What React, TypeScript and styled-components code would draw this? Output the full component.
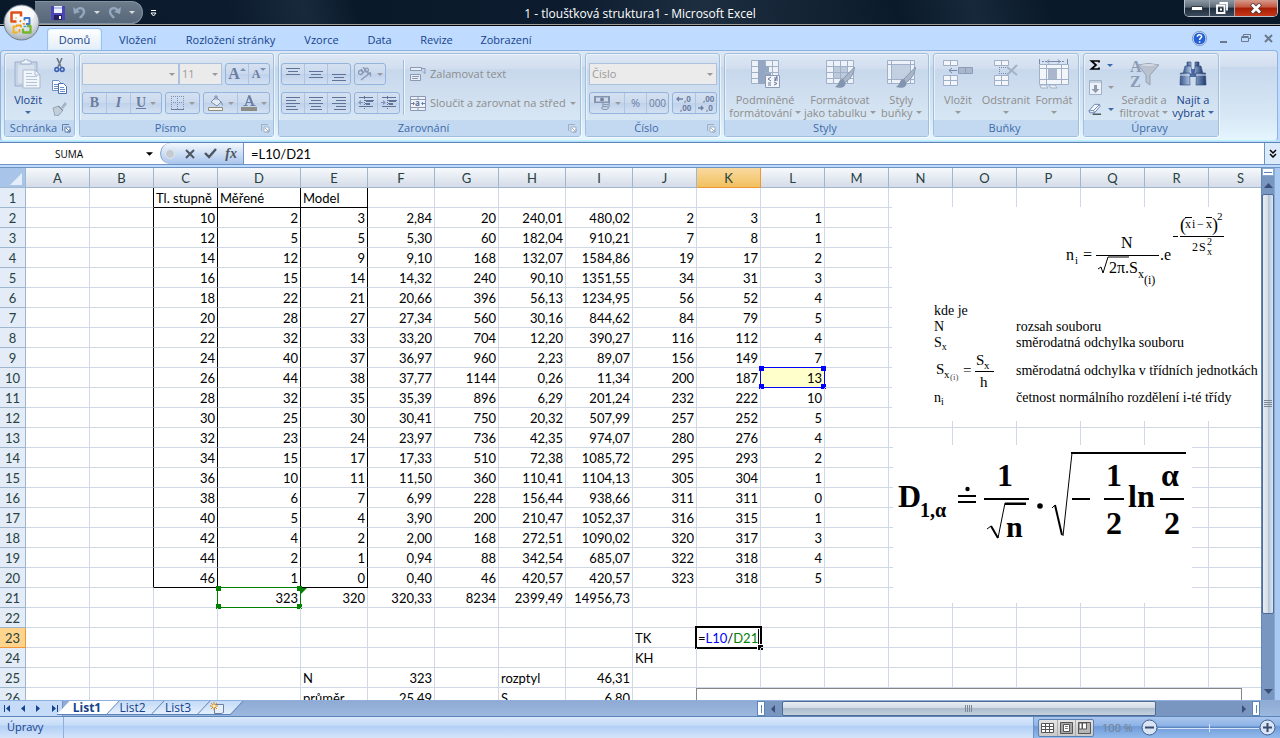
import React from "react";
import styled, { createGlobalStyle, css } from "styled-components";

const ui = `"Open Sans", "Noto Sans", sans-serif`;
const sheet = `Lato, "Open Sans", sans-serif`;
const serif = `"Liberation Serif", "DejaVu Serif", serif`;

const Global = createGlobalStyle`
  *, *::before, *::after { box-sizing: border-box; }
  body { margin: 0; background: #fff; }
  button, input, select { font: inherit; color: inherit; margin: 0; padding: 0; border: 0; background: none; outline: 0; border-radius: 0; }
  svg { display: block; flex: none; }
`;

/* ---------- window frame ---------- */

const Window = styled.div`
  display: flex;
  flex-direction: column;
  width: 100%;
  height: 100vh;
  overflow: hidden;
  position: relative;
  font: 11px/16px ${ui};
  color: #15428b;
  background: #bfdbff;
`;

const TitleBar = styled.header`
  flex: none;
  height: 26px;
  display: flex;
  align-items: flex-start;
  justify-content: space-between;
  background: linear-gradient(75deg, #0a192a 0%, #0c1b2d 18%, #172a3c 24%, #0a192a 28%, #0c1c2e 44%, #1d2e40 55%, #0b1a2b 70%, #16283a 76%, #0a192a 82%);
  border-bottom: 1px solid #000;
  box-shadow: inset 0 -1px 0 #9c9f9c;
`;

const Title = styled.h1`
  margin: 0;
  padding-top: 6px;
  font: 12px/16px ${ui};
  color: #fff;
  text-align: center;
`;

const Side = styled.div<{ $end?: boolean }>`
  flex: 1;
  display: flex;
  justify-content: ${(p) => (p.$end ? "flex-end" : "flex-start")};
  align-items: flex-start;
`;

const QuickAccess = styled.div`
  display: flex;
  align-items: center;
  gap: 8px;
  width: 108px;
  height: 23px;
  margin: 1px 0 0 35px;
  padding-left: 16px;
  border: 1px solid #8292a2;
  border-left: 0;
  border-radius: 0 12px 12px 0;
  background: linear-gradient(#6d7b8a, #56677a);
`;

const PlainButton = styled.button`
  display: flex;
  align-items: center;
  justify-content: center;
`;

const CustomizeButton = styled(PlainButton)`
  margin: 8px 0 0 5px;
  width: 10px;
  height: 11px;
`;

const OfficeButton = styled.button`
  position: absolute;
  left: 3px;
  top: 4px;
  width: 37px;
  height: 37px;
`;

const WindowButtons = styled.div`
  display: flex;
  height: 17px;
  margin-right: 2px;
  border: 1px solid #b9c2ca;
  border-top: 0;
  border-radius: 0 0 5px 5px;
  overflow: hidden;
`;

const WindowButton = styled.button<{ $close?: boolean }>`
  display: flex;
  justify-content: center;
  align-items: center;
  width: ${(p) => (p.$close ? 42 : 25)}px;
  height: 16px;
  border-right: ${(p) => (p.$close ? 0 : 1)}px solid #9aa6b0;
  background: ${(p) =>
    p.$close
      ? "linear-gradient(#d59a8c 0%, #c4563e 45%, #a61c04 50%, #c8381a 100%)"
      : "linear-gradient(#8d98a3 0%, #5d6b79 45%, #1c2b3b 50%, #3c4c5c 100%)"};
`;

/* ---------- ribbon ---------- */

const TabRow = styled.nav`
  flex: none;
  display: flex;
  align-items: flex-end;
  height: 24px;
  padding-left: 47px;
  background: #bfdbff;
`;

const Tab = styled.button<{ $w: number; $active?: boolean }>`
  width: ${(p) => p.$w}px;
  height: 22px;
  line-height: 21px;
  text-align: center;
  white-space: nowrap;
  border-radius: 4px 4px 0 0;
  ${(p) =>
    p.$active &&
    css`
      margin-right: 2px;
      background: linear-gradient(#fff, #e3edf9);
      border: 1px solid #9cc0ea;
      border-bottom: 0;
      box-shadow: inset 0 0 2px #b5f0f5;
    `}
`;

const DocButtons = styled.div`
  display: flex;
  align-items: center;
  gap: 13px;
  height: 24px;
  margin-left: auto;
  padding-right: 7px;
`;

const RibbonBar = styled.section`
  flex: none;
  display: flex;
  gap: 4px;
  height: 91px;
  margin: 0 2px 0 0;
  padding: 2px 4px 3px 3px;
  border: 1px solid #8db2e3;
  border-bottom-color: #b9f1fb;
  border-radius: 4px;
  background: linear-gradient(#dee8f5 0%, #d3dfef 17%, #c7d8ed 18%, #d8e8f5 75%, #e6f6ff 100%);
`;

const GroupBox = styled.section<{ $w: number }>`
  display: flex;
  flex-direction: column;
  width: ${(p) => p.$w}px;
  border: 1px solid #9fbfdf;
  border-radius: 3px;
  box-shadow: inset 1px 1px 0 rgba(255, 255, 255, 0.5), 1px 1px 0 rgba(255, 255, 255, 0.6);
  background: linear-gradient(#dde7f4 0%, #d2deef 18%, #c8d8ec 19%, #dcebf6 100%);
`;

const GroupBody = styled.div<{ $pad?: number }>`
  flex: 1;
  display: flex;
  padding: 0 ${(p) => p.$pad ?? 3}px;
`;

const Caption = styled.footer`
  display: flex;
  align-items: center;
  height: 16px;
  padding-right: 3px;
  color: #3e6aaa;
  background: #c2d9f1;
`;

const CaptionText = styled.span`
  flex: 1;
  text-align: center;
`;

const Rows = styled.div`
  display: flex;
  flex-direction: column;
  gap: 7px;
  padding-top: 9px;
`;

const Row = styled.div<{ $gap?: number }>`
  display: flex;
  align-items: center;
  gap: ${(p) => p.$gap ?? 3}px;
  height: 22px;
`;

const Segments = styled.div`
  display: flex;
  height: 22px;
  border: 1px solid #93b4dc;
  border-radius: 3px;
  background: linear-gradient(#d5e1f1 0%, #cbd9ee 48%, #bfd1ea 50%, #d3e0f2 100%);
`;

const Segment = styled.button<{ $w?: number }>`
  display: flex;
  align-items: center;
  justify-content: center;
  gap: 4px;
  width: ${(p) => p.$w ?? 22}px;
  color: #6a7c9f;
  & + & {
    border-left: 1px solid #adc5e4;
  }
`;

const Digits = styled.span`
  font: 10px/16px ${ui};
`;

const Glyph = styled.span<{ $size?: number; $italic?: boolean; $under?: boolean }>`
  font: bold ${(p) => p.$size ?? 14}px/14px ${serif};
  font-style: ${(p) => (p.$italic ? "italic" : "normal")};
  text-decoration: ${(p) => (p.$under ? "underline" : "none")};
  color: #6a7c9f;
`;

const DarkGlyph = styled(Glyph)`
  color: #4d5560;
`;

const SelectWrap = styled.label<{ $w: number }>`
  position: relative;
  display: flex;
  align-items: center;
  width: ${(p) => p.$w}px;
  height: 22px;
  border: 1px solid #abc1de;
  background: #ebebeb;
  svg {
    position: absolute;
    right: 3px;
  }
`;

const Select = styled.select`
  appearance: none;
  width: 100%;
  height: 20px;
  padding-left: 2px;
  color: #9a9a9a;
  opacity: 1;
`;

const Big = styled.button<{ $w: number; $on?: boolean }>`
  display: flex;
  flex-direction: column;
  align-items: center;
  width: ${(p) => p.$w}px;
  padding-top: 4px;
  font: 11px/13px ${ui};
  white-space: nowrap;
  color: ${(p) => (p.$on ? "#15428b" : "#8d8d8d")};
`;

const BigIcon = styled.span`
  display: flex;
  align-items: center;
  justify-content: center;
  height: 32px;
  margin-bottom: 3px;
`;

const BigLine = styled.span`
  display: flex;
  align-items: center;
  gap: 3px;
  height: 13px;
`;

const SmallColumn = styled.div<{ $w: number }>`
  display: flex;
  flex-direction: column;
  gap: 6px;
  width: ${(p) => p.$w}px;
  padding-top: 3px;
`;

const SmallButton = styled.button`
  display: flex;
  align-items: center;
  justify-content: center;
  gap: 6px;
  height: 16px;
`;

const TextButton = styled.button`
  display: flex;
  align-items: center;
  gap: 4px;
  height: 22px;
  padding-left: 5px;
  color: #8d8d8d;
  white-space: nowrap;
`;

const Divider = styled.div`
  width: 2px;
  height: 55px;
  margin: 6px 0 0 3px;
  border-left: 1px solid #9dbce0;
  border-right: 1px solid #eef5fc;
`;

/* ---------- formula bar ---------- */

const FormulaBar = styled.div`
  flex: none;
  display: flex;
  height: 23px;
  margin-top: 1px;
  border-top: 1px solid #5b84b8;
  border-bottom: 1px solid #6f94c4;
  background: #fff;
  color: #000;
`;

const NameBox = styled.div`
  display: flex;
  align-items: center;
  gap: 8px;
  width: 160px;
`;

const NameInput = styled.input`
  width: 138px;
  font: 10px/16px ${ui};
  text-align: center;
`;

const FormulaTools = styled.div`
  display: flex;
  align-items: center;
  justify-content: space-between;
  width: 84px;
  padding: 0 6px 0 3px;
  border-left: 1px solid #7d9cc8;
  border-right: 1px solid #6f94c4;
  border-radius: 11px 0 0 11px;
  background: linear-gradient(#f2f7fd, #a9c5ec);
`;

const FormulaInput = styled.input`
  flex: 1;
  min-width: 0;
  padding-left: 7px;
  font: 13px/20px ${sheet};
`;

const ExpandButton = styled(PlainButton)`
  width: 16px;
  border-left: 1px solid #6f94c4;
  background: #dcebfc;
`;

/* ---------- worksheet ---------- */

const Workspace = styled.main`
  flex: 1;
  min-height: 0;
  display: flex;
  margin-top: 2px;
  border-top: 1px solid #6f94c4;
  background: #a9c8f2;
`;

const GridView = styled.div`
  position: relative;
  flex: 1;
  min-width: 0;
  overflow: hidden;
  background: #fff;
`;

const Grid = styled.table`
  table-layout: fixed;
  width: 1273px;
  border-collapse: separate;
  border-spacing: 0;
  font: 13px/17px ${sheet};
  color: #000;
`;

const Col = styled.col<{ $w: number }>`
  width: ${(p) => p.$w}px;
`;

const ColHead = styled.th<{ $on?: boolean }>`
  height: 20px;
  padding: 2px 0 0;
  font-weight: normal;
  color: #27413e;
  border-right: 1px solid ${(p) => (p.$on ? "#f29536" : "#9eb6ce")};
  border-bottom: 1px solid ${(p) => (p.$on ? "#f29536" : "#9eb6ce")};
  background: ${(p) => (p.$on ? "linear-gradient(#f9d99f, #f1c15f)" : "linear-gradient(#f6f9fc, #d5dce8)")};
`;

const Corner = styled.th`
  height: 20px;
  padding: 0;
  border-right: 1px solid #9eb6ce;
  border-bottom: 1px solid #9eb6ce;
  background: #a9c4e9;
  svg {
    margin: 3px 0 0 10px;
  }
`;

const RowHead = styled.th<{ $on?: boolean }>`
  height: 20px;
  padding: 2px 0 0;
  font-weight: normal;
  color: #27413e;
  border-right: 1px solid ${(p) => (p.$on ? "#f29536" : "#9eb6ce")};
  border-bottom: 1px solid ${(p) => (p.$on ? "#f29536" : "#9eb6ce")};
  background: ${(p) => (p.$on ? "#ffd58d" : "#e4ecf7")};
`;

const Cell = styled.td<{ $left?: boolean; $right?: boolean; $bottom?: boolean; $fill?: boolean }>`
  position: relative;
  height: 20px;
  padding: 2px 2px 0;
  text-align: ${(p) => (p.$left ? "left" : "right")};
  white-space: nowrap;
  border-right: 1px solid ${(p) => (p.$right ? "#000" : "#d0d7e5")};
  border-bottom: 1px solid ${(p) => (p.$bottom ? "#000" : "#d0d7e5")};
  background: ${(p) => (p.$fill ? "#ffffcc" : "transparent")};
`;

const RangeFrame = styled.div<{ $color: string }>`
  position: absolute;
  inset: -1px;
  border: 1px solid ${(p) => p.$color};
`;

const Handle = styled.i<{ $color: string; $x: "left" | "right"; $y: "top" | "bottom" }>`
  position: absolute;
  ${(p) => p.$x}: -2px;
  ${(p) => p.$y}: -2px;
  width: 5px;
  height: 5px;
  background: ${(p) => p.$color};
`;

const ErrorMark = styled.i`
  position: absolute;
  left: 0;
  top: 0;
  border-top: 6px solid #008000;
  border-right: 6px solid transparent;
`;

const Editor = styled.div`
  position: absolute;
  inset: -2px;
  padding: 1px 0 0 1px;
  text-align: left;
  line-height: 18px;
  background: #fff;
  border: 2px solid #000;
  &::after {
    content: "";
    position: absolute;
    right: -3px;
    bottom: -3px;
    width: 6px;
    height: 6px;
    background: #000;
    border: 1px solid #fff;
    border-width: 1px 0 0 1px;
  }
`;

const Ref = styled.span<{ $color: string }>`
  color: ${(p) => p.$color};
`;

const Caret = styled.i`
  display: inline-block;
  width: 1px;
  height: 15px;
  vertical-align: top;
  background: #000;
`;

const Picture = styled.figure<{ $x: number; $y: number; $w: number; $h: number }>`
  position: absolute;
  left: ${(p) => p.$x}px;
  top: ${(p) => p.$y}px;
  width: ${(p) => p.$w}px;
  height: ${(p) => p.$h}px;
  margin: 0;
  overflow: hidden;
  background: #fff;
  font-family: ${serif};
  color: #000;
`;

const ChartFrame = styled(Picture)`
  border: 1px solid #868686;
`;

const Legend = styled.dl`
  display: grid;
  grid-template-columns: 82px max-content;
  grid-template-rows: 16px 16px 16px 39px 16px;
  align-items: center;
  margin: 0;
  padding: 6px 0 0 42px;
  font: 14px/16px ${serif};
  dt, dd { margin: 0; white-space: nowrap; }
  sub { font-size: 10px; line-height: 0; vertical-align: -3px; }
`;

/* ---------- scroll bars, sheet tabs, status ---------- */

const VScroll = styled.div`
  display: flex;
  flex-direction: column;
  width: 14px;
  margin-right: 5px;
  border-left: 1px solid #6288b8;
  border-right: 1px solid #86a8d4;
  background: #7896c0;
`;

const SplitBox = styled.div`
  display: flex;
  align-items: center;
  justify-content: center;
  height: 8px;
  background: #fff;
  border: 1px solid #8aa9cf;
`;

const ArrowCell = styled(PlainButton)`
  width: 12px;
  height: 18px;
  flex: none;
`;

const VThumb = styled.div`
  display: flex;
  align-items: center;
  justify-content: center;
  flex: 421;
  border: 1px solid #4f6a96;
  border-radius: 2px;
  background: linear-gradient(90deg, #e8edf2, #d5dde6 45%, #aec0d4 50%, #dfe8f0);
`;

const VTrack = styled.div`
  flex: 68;
`;

const BottomRow = styled.div`
  flex: none;
  display: flex;
  height: 17px;
  border-top: 1px solid #8fb0dc;
  border-bottom: 1px solid #5b84b8;
  background: linear-gradient(#8fabd4, #9db8de);
`;

const SheetNav = styled.div`
  display: flex;
  align-items: center;
  justify-content: space-around;
  width: 63px;
  background: #c5dbf8;
  border-right: 1px solid #6f94c4;
`;

const SheetTab = styled.button<{ $active?: boolean; $w: number }>`
  position: relative;
  z-index: ${(p) => (p.$active ? 2 : 1)};
  display: flex;
  justify-content: center;
  align-items: center;
  width: ${(p) => p.$w}px;
  height: 14px;
  padding-right: ${(p) => (p.$active ? 2 : 6)}px;
  font: ${(p) => (p.$active ? "bold" : "normal")} 12px/14px ${ui};
  &::before {
    content: "";
    position: absolute;
    inset: 0;
    z-index: -1;
    transform: skewX(-43deg);
    border-right: 1px solid #5b84b8;
    border-bottom: 1px solid #5b84b8;
    background: ${(p) => (p.$active ? "#fff" : "linear-gradient(#c4daf7, #e4effc)")};
  }
`;

const HScroll = styled.div`
  display: flex;
  flex: 0 1 503px;
  margin-left: auto;
  margin-right: 20px;
  background: #7896c0;
`;

const HSplit = styled.div`
  display: flex;
  align-items: center;
  justify-content: center;
  width: 8px;
  border: 1px solid #5b84b8;
  background: #fff;
`;

const HThumb = styled.div`
  display: flex;
  align-items: center;
  justify-content: center;
  flex: 374;
  border: 1px solid #4f6a96;
  border-radius: 2px;
  background: linear-gradient(#e8edf2, #d0d9e2 48%, #acbccd 50%, #c5d2df);
`;

const HTrack = styled.div`
  flex: 80;
`;

const HArrow = styled(PlainButton)`
  width: 17px;
`;

const StatusBar = styled.footer`
  flex: none;
  display: flex;
  height: 21px;
  background: linear-gradient(#d9e8fb 0%, #c6dcf8 38%, #b2cff5 45%, #d5e5fb 100%);
`;

const Mode = styled.div`
  width: 64px;
  padding-left: 7px;
  line-height: 20px;
  border-right: 1px solid #8fb0dc;
`;

const StatusRight = styled.div`
  display: flex;
  align-items: center;
  margin-left: auto;
  width: 247px;
  padding: 0 4px;
  border-left: 1px solid #6f94c4;
  background: linear-gradient(#a9c6ee 0%, #8fb4e6 40%, #6f9bd8 46%, #94bbee 100%);
`;

const ViewButtons = styled.div`
  display: flex;
  height: 18px;
  border: 1px solid #5b7fb0;
  border-radius: 2px;
  background: linear-gradient(#e4e4e4, #c9c9c9);
`;

const ViewButton = styled(PlainButton)`
  width: 18px;
  & + & {
    border-left: 1px solid #b0b0b0;
  }
`;

const Zoom = styled.span`
  width: 47px;
  text-align: center;
  color: #75808f;
`;

const ZoomTrack = styled.div`
  position: relative;
  flex: 1;
  height: 2px;
  background: #5f86bd;
  border-bottom: 1px solid #d6e5fa;
  &::after {
    content: "";
    position: absolute;
    left: 50%;
    top: -3px;
    width: 1px;
    height: 8px;
    background: #d6e5fa;
  }
`;

/* ---------- icons ---------- */

const Down = ({ c = "#15428b", w = 6 }: { c?: string; w?: number }) => (
  <svg width={w} height={w === 6 ? 3 : 4} viewBox="0 0 6 3"><path d="M0 0h6L3 3z" fill={c} /></svg>
);
const grey = "#9a9a9a";

const Launcher = ({ c }: { c: string }) => (
  <svg width="9" height="9" viewBox="0 0 9 9">
    <path d="M.5 7V.5H7" stroke={c} fill="none" />
    <path d="M3 3h5v5H3z" fill="#fff" stroke={c} />
    <path d="M4 4l3.500 3.500M8 5v3H5" stroke={c} fill="none" />
  </svg>
);

const Office = () => (
  <svg width="37" height="37" viewBox="0 0 37 37">
    <defs>
      <radialGradient id="orb" cx=".5" cy=".3" r=".75">
        <stop offset="0" stopColor="#fff" /><stop offset=".5" stopColor="#e6eaee" /><stop offset="1" stopColor="#9aa5b0" />
      </radialGradient>
    </defs>
    <circle cx="18.500" cy="18.500" r="17.500" fill="url(#orb)" stroke="#6f7e8e" />
    <ellipse cx="18.500" cy="10" rx="13" ry="7.500" fill="#fff" opacity=".7" />
    <g fill="none" strokeLinejoin="round">
      <path d="M13.500 17.500H8.500V8.500h9.500v4" stroke="#e0521b" strokeWidth="2.600" />
      <path d="M21.500 16.500V14h5v6h-3.500" stroke="#3b78c9" strokeWidth="1.900" />
      <path d="M14.500 28.500H10.500v-6h3.500" stroke="#f3b21a" strokeWidth="2" />
      <path d="M20 24.500v4h7.500v-6.500h-3.500" stroke="#77b52c" strokeWidth="2.300" />
      <path d="M12.500 14h1M16.500 17.500h1v-1.500M20.500 19v1h1.500" stroke="#ee8a1c" strokeWidth="1.600" />
      <path d="M16.500 28.500v-3.500M13 21.500h5v2" stroke="#f0a01c" strokeWidth="1.800" />
      <path d="M20.500 22.500h3" stroke="#4f9fe0" strokeWidth="1.500" />
    </g>
  </svg>
);

const Save = () => (
  <svg width="14" height="14" viewBox="0 0 14 14">
    <path d="M0 0h14v14H1L0 13z" fill="#4a45b5" />
    <path d="M3 0h8v7H3z" fill="#eef0fb" /><path d="M3 1h8v2H3z" fill="#b9bff0" />
    <path d="M3 9h8v5H3z" fill="#23205f" /><path d="M8 10h2v3H8z" fill="#fff" />
  </svg>
);

const Undo = ({ flip }: { flip?: boolean }) => (
  <svg width="13" height="13" viewBox="0 0 13 13">
    <g transform={flip ? "translate(13 0) scale(-1 1)" : undefined}>
      <path d="M3 5C5 1 11 1 11 6c0 3-3 4-4 6" fill="none" stroke="#94a8c0" strokeWidth="2.400" />
      <path d="M0 1l1 7 6-2z" fill="#94a8c0" />
    </g>
  </svg>
);

const Paste = () => (
  <svg width="28" height="30" viewBox="0 0 28 30">
    <path d="M1 3h22v24H1z" fill="#c6d3e4" stroke="#9db0c9" />
    <path d="M4 6h16v18H4z" fill="#d8e2ee" />
    <path d="M7 5V2h3a2 2 0 014 0h3v3z" fill="#eef3f9" stroke="#9db0c9" />
    <path d="M9 11h12l5 5v13H9z" fill="#f2f6fb" stroke="#a9bad0" />
    <path d="M21 11v5h5" fill="none" stroke="#a9bad0" />
    <path d="M12 14.500h6M12 17.500h11M12 20.500h11M12 23.500h11M12 26.500h11" stroke="#b5c5d9" />
  </svg>
);

const Scissors = () => (
  <svg width="11" height="15" viewBox="0 0 11 15">
    <path d="M3 0l4 9M8 0L4 9" stroke="#6c7786" strokeWidth="1.600" />
    <circle cx="2.800" cy="11.500" r="1.900" fill="none" stroke="#3d63b0" strokeWidth="1.600" />
    <circle cx="8.200" cy="11.500" r="1.900" fill="none" stroke="#3d63b0" strokeWidth="1.600" />
  </svg>
);

const Copy = () => (
  <svg width="16" height="14" viewBox="0 0 16 14">
    <path d="M.5.5h6l2 2v8h-8z" fill="#fff" stroke="#6f8fc4" />
    <path d="M2 4.500h4M2 6.500h4M2 8.500h4" stroke="#6f8fc4" />
    <path d="M6.500 3.500h5l3 3v7h-8z" fill="#fff" stroke="#4a6db3" />
    <path d="M8 7.500h4M8 9.500h5M8 11.500h5" stroke="#6f8fc4" />
  </svg>
);

const Painter = () => (
  <svg width="15" height="14" viewBox="0 0 15 14">
    <path d="M9 5l4-5 2 2-4 5z" fill="#a5b4c6" />
    <path d="M1 6l6-2 4 4-4 5-4 1z" fill="#c3ced9" stroke="#95a6ba" />
    <path d="M6 4l5 5" stroke="#8091a8" />
  </svg>
);

const Grow = ({ shrink }: { shrink?: boolean }) => (
  <svg width="6" height="12" viewBox="0 0 6 12"><path d={shrink ? "M0 0h6L3 3z" : "M0 3h6L3 0z"} fill="#7f92b3" /></svg>
);

const Lines = ({ rows }: { rows: [number, number, number][] }) => (
  <svg width="14" height="14" viewBox="0 0 14 14">
    {rows.map(([x, y, w]) => <path key={y} d={`M${x} ${y + 0.5}h${w}`} stroke="#5f7298" />)}
  </svg>
);

const Indent = ({ flip }: { flip?: boolean }) => (
  <svg width="16" height="14" viewBox="0 0 16 14">
    <path d="M1 1.500h14M7 4.500h9M7 7.500h5M1 10.500h14" stroke="#5f7298" />
    <path d="M8 5h7M8 8h4" stroke="#5f7298" strokeWidth="2" />
    <path d="M6.500 0v14" stroke="#5f7298" strokeDasharray="1 1" />
    <path d={flip ? "M5 6H3V4L0 6.500 3 9V7h2z" : "M0 6h2V4l3 2.500L2 9V7H0z"} fill="#8497b8" />
  </svg>
);

const Orientation = () => (
  <svg width="16" height="14" viewBox="0 0 16 14">
    <g fill="none" stroke="#8a99b3" strokeWidth="1.300">
      <circle cx="3.500" cy="5.500" r="2" /><path d="M4 2l3 4" />
      <path d="M6 0l4 5" /><circle cx="9.500" cy="3" r="1.900" />
      <path d="M4 13l9-7M10 6h3.500v3.500" />
    </g>
  </svg>
);

const Border = () => (
  <svg width="14" height="14" viewBox="0 0 14 14">
    <path d="M.5 0v13M12.500 0v13M6.500 0v13M0 .5h13M0 6.500h13" stroke="#7d8fb0" strokeDasharray="1 1" fill="none" />
    <path d="M0 13.500h13" stroke="#6d7fa3" />
  </svg>
);

const Fill = () => (
  <svg width="16" height="16" viewBox="0 0 16 16">
    <path d="M3 7l5-5 5 5-4 4z" fill="#e3eaf3" stroke="#7f90ad" />
    <path d="M7 5V1h2v4" stroke="#7f90ad" fill="none" /><path d="M13 6q2 2 2 5-2-1-2-5z" fill="#7f90ad" />
    <path d="M.5 12.500h14v3H.5z" fill="#f6f4e8" stroke="#8c8c80" />
  </svg>
);

const FontColor = () => (
  <svg width="16" height="16" viewBox="0 0 16 16">
    <path d="M8 .5L4.500 10.500" stroke="#6d7fa3" strokeWidth="1.200" />
    <path d="M8 .5l4 10" stroke="#6d7fa3" strokeWidth="2.200" />
    <path d="M5.500 7.500h5M2.500 10.500h4M9.500 10.500h5" stroke="#6d7fa3" />
    <path d="M0 12h16v4H0z" fill="#8d8c87" />
  </svg>
);

const Wrap = () => (
  <svg width="16" height="16" viewBox="0 0 16 16">
    <path d="M.5 1.500h11v3H.5zM.5 8.500h10v6H.5z" fill="#e9eef5" stroke="#8a99b3" />
    <path d="M2 10.500h7M2 12.500h6" stroke="#8a99b3" />
    <path d="M12 2.500h3v5l-2-2m2 2" fill="none" stroke="#8a99b3" />
  </svg>
);

const Merge = () => (
  <svg width="16" height="15" viewBox="0 0 16 15">
    <path d="M.5.5h15v14H.5z" fill="#eef2f8" stroke="#8a99b3" />
    <path d="M.5 3.500h15M.5 11.500h15M8 0v3M8 12v3" stroke="#8a99b3" />
    <path d="M1 7.500h3M12 7.500h3M3 6l1.500 1.500L3 9M13 6l-1.500 1.500L13 9" stroke="#6d7fa3" fill="none" />
    <text x="5" y="10" fontSize="8" fontWeight="bold" fill="#5f7093" fontFamily="Open Sans">a</text>
  </svg>
);

const Currency = () => (
  <svg width="17" height="16" viewBox="0 0 17 16">
    <path d="M0 1h16v7H0z" fill="#8495b3" /><path d="M2 2.500h12v4H2z" fill="#cfd9e7" /><circle cx="8" cy="4.500" r="2" fill="#7385a6" />
    <g fill="#cfd9e7" stroke="#8495b3"><ellipse cx="12" cy="9" rx="3.500" ry="1.500" /><ellipse cx="12" cy="11" rx="3.500" ry="1.500" /><ellipse cx="11" cy="13" rx="3.500" ry="1.500" /></g>
  </svg>
);

const Decimals = ({ less }: { less?: boolean }) => (
  <svg width="18" height="18" viewBox="0 0 18 18" fontFamily="Open Sans" fontSize="8" fontWeight="bold" fill="#6d7fa3">
    <text x={less ? 6 : 9} y="8">{less ? ",00" : ",0"}</text>
    <text x={less ? 9 : 5} y="17">{less ? ",0" : ",00"}</text>
    <path d={less ? "M1 14h5M4 12l2 2-2 2" : "M2 5h6M4 3L2 5l2 2"} fill="none" stroke="#6d7fa3" strokeWidth="1.300" />
  </svg>
);

const sheetGrid = (
  <>
    <path d="M1.500 1.500h27v23h-27z" fill="#edf2f8" />
    <path d="M1.500 1.500h27v23h-27zM8.500 1v24M15.500 1v24M22.500 1v24M1 7.500h28M1 13.500h28M1 19.500h28" fill="none" stroke="#9fb0c8" />
  </>
);

const Brush = () => (
  <g>
    <path d="M29.500 8L17 21l2 3c6-3 10-9 10.500-16z" fill="#a9b6c8" stroke="#8798b2" />
    <path d="M18 20c-5 0-3 5-8 8 6 2 12 0 10-5z" fill="#8294b0" />
  </g>
);

const Conditional = () => (
  <svg width="30" height="30" viewBox="0 0 30 30">
    {sheetGrid}
    <path d="M8 1h7v24H8zM15 7h4v6h-4zM15 14h6v5h-6z" fill="#94a6c2" />
    <path d="M15.500 16.500h14v12h-14z" fill="#f2f5fa" stroke="#8a9bb8" />
    <path d="M21 18l-3 2 3 2M18 24h3M24 19h4M24 21h4M27 17l-2 5M24 23l3 1.500-3 1.500M18 26h3" stroke="#62759b" fill="none" />
  </svg>
);

const FormatTable = () => (
  <svg width="30" height="30" viewBox="0 0 30 30">
    {sheetGrid}<path d="M9 8h6v5H9zM16 8h6v5h-6zM9 14h6v5H9zM16 14h6v5h-6z" fill="#bccadc" /><Brush />
  </svg>
);

const CellStyles = () => (
  <svg width="30" height="30" viewBox="0 0 30 30">
    <path d="M1.500 1.500h27v23h-27z" fill="#edf2f8" stroke="#9fb0c8" />
    <path d="M5.500 1v24M24.500 1v24M1 5.500h28M1 20.500h28" stroke="#9fb0c8" />
    <path d="M6 6h18v14H6z" fill="#c3d0e1" /><Brush />
  </svg>
);

const InsertCells = () => (
  <svg width="30" height="30" viewBox="0 0 30 30">
    <g fill="#f2f5fa" stroke="#9fb0c8">
      <path d="M.5 1.500h14v5H.5zM7.500 1v6M.5 16.500h14v10H.5zM7.500 16v11M0 21.500h15" />
      <path d="M15.500 8.500h14v6h-14z" fill="#a9b6cb" stroke="#8c9db8" /><path d="M22.500 8v7" stroke="#8c9db8" />
    </g>
    <path d="M14 11.500H6M9 9l-3 2.500L9 14" fill="none" stroke="#7789a8" />
  </svg>
);

const DeleteCells = () => (
  <svg width="30" height="30" viewBox="0 0 30 30">
    <path d="M3.500 1.500h14v5h-14zM10.500 1v6M3.500 16.500h14v10h-14zM10.500 16v11M3 21.500h15" fill="#f2f5fa" stroke="#9fb0c8" />
    <path d="M8 8.500h9M8 14.500h9M8.500 8v7" stroke="#7789a8" strokeDasharray="1 1" fill="none" />
    <path d="M16 8l10 8M26 6L16 16" stroke="#a3b1c6" strokeWidth="2" />
  </svg>
);

const FormatCells = () => (
  <svg width="32" height="32" viewBox="0 0 32 32">
    <path d="M1.500 6.500h29v20h-29z" fill="#f2f5fa" stroke="#9fb0c8" />
    <path d="M8.500 6v21M23.500 6v21M1 10.500h30M1 21.500h30" stroke="#9fb0c8" />
    <path d="M10 11h9v10h-9z" fill="#a9b6cb" />
    <path d="M1.500 1v5M29.500 1v5" stroke="#7789a8" fill="none" />
    <path d="M4 3.500h6M21 3.500h6" stroke="#7789a8" strokeDasharray="2 1" /><path d="M10 3.500h11M11 1.500l-2 2 2 2M20 1.500l2 2-2 2" stroke="#7789a8" fill="none" />
    <path d="M2 27h6l2 3H3zM11 27h6l2 3h-6z" fill="#eef2f7" stroke="#9fb0c8" />
  </svg>
);

const Sigma = () => (
  <svg width="12" height="10" viewBox="0 0 10 10">
    <path d="M9 2.500V1H1.500L6 5 1.500 9H9V7.500" fill="none" stroke="#000" strokeWidth="1.700" />
  </svg>
);
const FillDown = () => (
  <svg width="13" height="15" viewBox="0 0 13 15">
    <path d="M.5.5h12v14H.5z" fill="#eef2f8" stroke="#9fb0c8" /><path d="M1 1h11v2H1z" fill="#c5d0df" />
    <path d="M5 5h3v4h2.500l-4 4-4-4H5z" fill="#8d9bb1" />
  </svg>
);
const Eraser = () => (
  <svg width="14" height="13" viewBox="0 0 15 13">
    <path d="M1 8l6-7h5l1 2-6 7H2z" fill="#f4f7fc" stroke="#6680ad" /><path d="M1 8l5-.5 1 2.500M6 7.500L12.500 1" stroke="#6680ad" fill="none" />
    <path d="M5 11.500h9" stroke="#000" />
  </svg>
);
const SortFilter = () => (
  <svg width="32" height="30" viewBox="0 0 32 30">
    <g fontFamily="Liberation Serif" fontWeight="bold" fontSize="16" fill="#8c9bb5"><text x="2" y="13">A</text><text x="2" y="28">Z</text></g>
    <path d="M10 6q10-3 21 0l-9 10v10l-4-3v-7z" fill="#b9c2ce" stroke="#95a2b5" /><path d="M12 6q9-2 17 0-8 2-17 0z" fill="#d7dde5" />
  </svg>
);
const Binoculars = () => (
  <svg width="28" height="28" viewBox="0 0 28 28">
    <defs>
      <linearGradient id="bino" x1="0" x2="1" y1="0" y2="0"><stop offset="0" stopColor="#3a5689" /><stop offset=".4" stopColor="#b4caec" /><stop offset="1" stopColor="#1f3a6e" /></linearGradient>
    </defs>
    <path d="M11 9h6v8h-6z" fill="#4c6ca5" />
    <g fill="url(#bino)" stroke="#2d4675" strokeWidth=".6">
      <path d="M8 2h4v4H8zM16 2h4v4h-4z" /><path d="M6 6h6l1 8H4zM16 6h6l2 8h-9z" />
      <path d="M1.500 13h9l.5 12H1zM17.500 13h9l.5 12H17z" />
    </g>
    <path d="M1 15h10M17 15h10" stroke="#dde8f8" />
  </svg>
);
const Tri = ({ d, w = 7, h = 7, c = "#3a4e78" }: { d: string; w?: number; h?: number; c?: string }) => (
  <svg width={w} height={h} viewBox={`0 0 ${w} ${h}`}><path d={d} fill={c} /></svg>
);
const ZoomKnob = ({ plus }: { plus?: boolean }) => (
  <svg width="17" height="17" viewBox="0 0 17 17">
    <circle cx="8.500" cy="8.500" r="7.500" fill="#d9e5f4" stroke="#3f5f92" />
    <path d={plus ? "M4 8.500h9M8.500 4v9" : "M4 8.500h9"} stroke="#3a4d70" strokeWidth="2" />
  </svg>
);

const Root = ({ d, w = 1 }: { d: string; w?: number }) => <path d={d} fill="none" stroke="#000" strokeWidth={w} />;

const Density = () => (
  <svg width="368" height="90" viewBox="0 0 368 90" fontFamily="Liberation Serif" fontSize="16">
    <text x="174" y="53">n</text><text x="183" y="57" fontSize="11">i</text>
    <text x="191" y="53">=</text>
    <text x="229" y="41">N</text>
    <Root d="M204 48.500h63" />
    <Root d="M206 62l3-2 2 6 5-16h21" />
    <text x="217" y="66">2π.</text><text x="237" y="66">S</text>
    <text x="246" y="71" fontSize="12">x</text><text x="252" y="77" fontSize="12">(i)</text>
    <text x="268" y="53">.e</text>
    <text x="288" y="24" fontSize="18">(</text><text x="293" y="21" fontSize="12">x</text><text x="300" y="21" fontSize="12">i</text>
    <text x="305" y="21" fontSize="12">−</text><text x="314" y="21" fontSize="12">x</text><text x="320" y="24" fontSize="18">)</text>
    <text x="325" y="13" fontSize="11">2</text>
    <Root d="M293 10.500h7M314 10.500h6M288 29.500h44M281 29.500h5" />
    <text x="300" y="44" fontSize="12">2</text><text x="307" y="44" fontSize="12">S</text>
    <text x="315" y="38" fontSize="10">2</text><text x="315" y="48" fontSize="10">x</text>
  </svg>
);

const ClassDeviation = () => (
  <svg width="64" height="38" viewBox="0 0 64 38" fontFamily="Liberation Serif" fontSize="15">
    <text x="2" y="22">S</text><text x="10" y="26" fontSize="11">x</text><text x="16" y="28" fontSize="9" fill="#555">(i)</text>
    <text x="29" y="23">=</text><text x="42" y="13">S</text><text x="50" y="17" fontSize="11">x</text>
    <Root d="M41 19.500h19" /><text x="46" y="35">h</text>
  </svg>
);

const Critical = () => (
  <svg width="299" height="120" viewBox="0 0 299 120" fontFamily="Liberation Serif" fontWeight="bold" fontSize="32">
    <text x="5" y="62">D</text>
    <text x="27" y="72" fontSize="20">1,α</text>
    <Root d="M65 51h18M65 57h18" w={2} /><circle cx="74.500" cy="44" r="2.200" />
    <text x="104" y="41">1</text>
    <Root d="M91 54h45" w={2} />
    <Root d="M94 84l4-3" /><Root d="M98 81l7 12" w={2} /><Root d="M105 93l7-35h21" w={1} /><Root d="M112 59h21" w={2} />
    <text x="113" y="92" fontSize="30">n</text>
    <circle cx="147" cy="61" r="2.800" />
    <Root d="M159 63l3-3" /><Root d="M162 60l7 30" w={2} /><Root d="M170 91l9-83" />
    <Root d="M178 8h115" w={2} />
    <Root d="M179 54h18M211 54h20M267 54h24" w={2} />
    <text x="213" y="41">1</text><text x="213" y="89">2</text>
    <text x="235" y="62">ln</text>
    <text x="268" y="41">α</text><text x="271" y="89">2</text>
  </svg>
);

/* ---------- sheet content ---------- */

const columns: [string, number][] = [
  ["A", 64], ["B", 64], ["C", 64], ["D", 83], ["E", 67], ["F", 67], ["G", 64], ["H", 67], ["I", 67], ["J", 64],
  ["K", 64], ["L", 64], ["M", 64], ["N", 64], ["O", 64], ["P", 64], ["Q", 64], ["R", 64], ["S", 64],
];

const data: Record<number, string> = {
  1: "Tl. stupně|Měřené|Model",
  2: "10|2|3|2,84|20|240,01|480,02|2|3|1",
  3: "12|5|5|5,30|60|182,04|910,21|7|8|1",
  4: "14|12|9|9,10|168|132,07|1584,86|19|17|2",
  5: "16|15|14|14,32|240|90,10|1351,55|34|31|3",
  6: "18|22|21|20,66|396|56,13|1234,95|56|52|4",
  7: "20|28|27|27,34|560|30,16|844,62|84|79|5",
  8: "22|32|33|33,20|704|12,20|390,27|116|112|4",
  9: "24|40|37|36,97|960|2,23|89,07|156|149|7",
  10: "26|44|38|37,77|1144|0,26|11,34|200|187|13",
  11: "28|32|35|35,39|896|6,29|201,24|232|222|10",
  12: "30|25|30|30,41|750|20,32|507,99|257|252|5",
  13: "32|23|24|23,97|736|42,35|974,07|280|276|4",
  14: "34|15|17|17,33|510|72,38|1085,72|295|293|2",
  15: "36|10|11|11,50|360|110,41|1104,13|305|304|1",
  16: "38|6|7|6,99|228|156,44|938,66|311|311|0",
  17: "40|5|4|3,90|200|210,47|1052,37|316|315|1",
  18: "42|4|2|2,00|168|272,51|1090,02|320|317|3",
  19: "44|2|1|0,94|88|342,54|685,07|322|318|4",
  20: "46|1|0|0,40|46|420,57|420,57|323|318|5",
  21: "|323|320|320,33|8234|2399,49|14956,73",
  23: "|||||||TK",
  24: "|||||||KH",
  25: "||N|323||rozptyl|46,31",
  26: "||průměr|25,49||S|6,80",
};

const Frame = ({ color }: { color: string }) => (
  <>
    <RangeFrame $color={color} />
    {(["left", "right"] as const).map((x) =>
      (["top", "bottom"] as const).map((y) => <Handle key={x + y} $color={color} $x={x} $y={y} />),
    )}
  </>
);

const SheetTable = () => (
  <Grid>
    <colgroup>
      <Col $w={26} />
      {columns.map(([n, w]) => <Col key={n} $w={w} />)}
    </colgroup>
    <thead>
      <tr>
        <Corner><Tri d="M12 0v12H0z" w={12} h={12} c="#e4eefb" /></Corner>
        {columns.map(([n]) => <ColHead key={n} scope="col" $on={n === "K"}>{n}</ColHead>)}
      </tr>
    </thead>
    <tbody>
      {Array.from({ length: 26 }, (_, i) => i + 1).map((r) => {
        const values = (data[r] ?? "").split("|");
        return (
          <tr key={r}>
            <RowHead scope="row" $on={r === 23}>{r}</RowHead>
            {columns.map(([n], c) => {
              const text = values[c - 2] ?? "";
              const id = n + r;
              return (
                <Cell
                  key={n}
                  $left={/^[A-Za-z]/.test(text)}
                  $right={r <= 20 && c >= 1 && c <= 4}
                  $bottom={(r === 1 || r === 20) && c >= 2 && c <= 4}
                  $fill={id === "L10"}
                >
                  {text}
                  {id === "L10" && <Frame color="#0000ff" />}
                  {id === "D21" && <Frame color="#008000" />}
                  {id === "E21" && <ErrorMark />}
                  {id === "K23" && (
                    <Editor>
                      =<Ref $color="#0000ff">L10</Ref>/<Ref $color="#008000">D21</Ref><Caret />
                    </Editor>
                  )}
                </Cell>
              );
            })}
          </tr>
        );
      })}
    </tbody>
  </Grid>
);

const Group = ({ w, name, launcher, pad, dim, children }: {
  w: number; name: string; launcher?: boolean; pad?: number; dim?: boolean; children: React.ReactNode;
}) => (
  <GroupBox $w={w}>
    <GroupBody $pad={pad}>{children}</GroupBody>
    <Caption>
      <CaptionText>{name}</CaptionText>
      {launcher && <PlainButton aria-label={name}><Launcher c={dim ? "#9fb0c4" : "#5f7fae"} /></PlainButton>}
    </Caption>
  </GroupBox>
);

const BigButton = ({ w, icon, lines, on }: { w: number; icon: React.ReactNode; lines: string[]; on?: boolean }) => (
  <Big $w={w} $on={on}>
    <BigIcon>{icon}</BigIcon>
    <BigLine>{lines[0]}</BigLine>
    <BigLine>{lines[1]}<Down c={on ? "#3e6aaa" : grey} /></BigLine>
  </Big>
);

const tabs: [string, number][] = [
  ["Vložení", 67], ["Rozložení stránky", 119], ["Vzorce", 63], ["Data", 53], ["Revize", 61], ["Zobrazení", 78],
];

export default function App() {
  return (
    <Window>
      <Global />
      <TitleBar>
        <Side>
          <QuickAccess>
            <PlainButton aria-label="Uložit"><Save /></PlainButton>
            <PlainButton aria-label="Zpět"><Undo /></PlainButton>
            <Down c="#d8dde2" />
            <PlainButton aria-label="Znovu"><Undo flip /></PlainButton>
            <Down c="#d8dde2" />
          </QuickAccess>
          <CustomizeButton aria-label="Přizpůsobit panel">
            <svg width="7" height="7" viewBox="0 0 7 7"><path d="M1 .5h5M1 3h5L3.500 6z" stroke="#fff" fill="none" /></svg>
          </CustomizeButton>
        </Side>
        <Title>1 - tloušťková struktura1 - Microsoft Excel</Title>
        <Side $end>
          <WindowButtons>
            <WindowButton aria-label="Minimalizovat">
              <svg width="12" height="5" viewBox="0 0 12 5"><path d="M.5.5h11v4H.5z" fill="#fff" stroke="#333b45" /></svg>
            </WindowButton>
            <WindowButton aria-label="Obnovit">
              <svg width="12" height="12" viewBox="0 0 12 12"><path d="M3.500 1h7.500v7.500M1 3.500h7.500V11H1z" stroke="#fff" strokeWidth="1.800" fill="none" /><path d="M4 6.500h2v2H4z" fill="#fff" /></svg>
            </WindowButton>
            <WindowButton $close aria-label="Zavřít">
              <svg width="12" height="11" viewBox="0 0 12 11"><path d="M1.500 1l9 9M10.500 1l-9 9" stroke="#4a3a3a" strokeWidth="4.400" /><path d="M2 1.500l8 8M10 1.500l-8 8" stroke="#fff" strokeWidth="2.800" /></svg>
            </WindowButton>
          </WindowButtons>
        </Side>
      </TitleBar>

      <TabRow>
        <Tab $w={55} $active>Domů</Tab>
        {tabs.map(([t, w]) => <Tab key={t} $w={w}>{t}</Tab>)}
        <DocButtons>
          <PlainButton aria-label="Nápověda">
            <svg width="15" height="15" viewBox="0 0 15 15">
              <circle cx="7.500" cy="7.500" r="6.500" fill="#2460d8" stroke="#fff" /><circle cx="7.500" cy="7.500" r="7" fill="none" stroke="#6d8fc9" />
              <path d="M5.300 5.700C5.500 3 9.800 3.200 9.600 5.700 9.500 7 7.600 7 7.600 9M7.600 10.200v1.600" fill="none" stroke="#fff" strokeWidth="1.500" />
            </svg>
          </PlainButton>
          <PlainButton aria-label="Minimalizovat sešit"><svg width="8" height="9" viewBox="0 0 8 9"><path d="M0 8h7" stroke="#6b7a8c" strokeWidth="2" /></svg></PlainButton>
          <PlainButton aria-label="Obnovit sešit">
            <svg width="10" height="8" viewBox="0 0 10 8"><path d="M2.500 2V.5h7v4H8M.5 3.500h7v4h-7zM.5 2.500h7" fill="none" stroke="#6b7a8c" /></svg>
          </PlainButton>
          <PlainButton aria-label="Zavřít sešit"><svg width="9" height="9" viewBox="0 0 9 9"><path d="M1 1l7 7M8 1L1 8" stroke="#6b7a8c" strokeWidth="2" /></svg></PlainButton>
        </DocButtons>
      </TabRow>
      <OfficeButton aria-label="Tlačítko Office"><Office /></OfficeButton>

      <RibbonBar>
        <Group w={71} name="Schránka" launcher>
          <BigButton w={41} icon={<Paste />} lines={["Vložit", ""]} on />
          <SmallColumn $w={23}>
            <SmallButton aria-label="Vyjmout"><Scissors /></SmallButton>
            <SmallButton aria-label="Kopírovat"><Copy /></SmallButton>
            <SmallButton aria-label="Kopírovat formát"><Painter /></SmallButton>
          </SmallColumn>
        </Group>

        <Group w={195} name="Písmo" launcher dim pad={2}>
          <Rows>
            <Row>
              <Row $gap={0}>
                <SelectWrap $w={97}><Select aria-label="Písmo" disabled><option> </option></Select><Down c={grey} /></SelectWrap>
                <SelectWrap $w={43}><Select aria-label="Velikost písma" disabled><option>11</option></Select><Down c={grey} /></SelectWrap>
              </Row>
              <Segments>
                <Segment $w={22} aria-label="Zvětšit písmo"><Row $gap={0}><Glyph $size={16}>A</Glyph><Grow /></Row></Segment>
                <Segment $w={21} aria-label="Zmenšit písmo"><Row $gap={0}><Glyph $size={12}>A</Glyph><Grow shrink /></Row></Segment>
              </Segments>
            </Row>
            <Row>
              <Segments>
                <Segment $w={23}><Glyph>B</Glyph></Segment>
                <Segment $w={24}><Glyph $italic>I</Glyph></Segment>
                <Segment $w={31}><Glyph $under>U</Glyph><Down c={grey} /></Segment>
              </Segments>
              <Segments><Segment $w={33} aria-label="Ohraničení"><Border /><Down c={grey} /></Segment></Segments>
              <Segments>
                <Segment $w={33} aria-label="Barva výplně"><Fill /><Down c={grey} /></Segment>
                <Segment $w={32} aria-label="Barva písma"><FontColor /><Down c={grey} /></Segment>
              </Segments>
            </Row>
          </Rows>
        </Group>

        <Group w={303} name="Zarovnání" launcher dim pad={2}>
          <Rows>
            <Row>
              <Segments>
                <Segment aria-label="Nahoru"><Lines rows={[[0, 1, 14], [2, 4, 10], [0, 7, 14]]} /></Segment>
                <Segment $w={23} aria-label="Na střed"><Lines rows={[[0, 4, 14], [2, 7, 10], [0, 10, 14]]} /></Segment>
                <Segment $w={23} aria-label="Dolů"><Lines rows={[[0, 7, 14], [2, 10, 10], [0, 13, 14]]} /></Segment>
              </Segments>
              <Segments><Segment $w={30} aria-label="Orientace"><Orientation /><Down c={grey} /></Segment></Segments>
            </Row>
            <Row>
              <Segments>
                <Segment aria-label="Vlevo"><Lines rows={[[0, 1, 14], [0, 4, 10], [0, 7, 14], [0, 10, 10], [0, 13, 12]]} /></Segment>
                <Segment $w={23} aria-label="Na střed"><Lines rows={[[0, 1, 14], [2, 4, 10], [0, 7, 14], [2, 10, 10], [1, 13, 12]]} /></Segment>
                <Segment $w={23} aria-label="Vpravo"><Lines rows={[[0, 1, 14], [4, 4, 10], [0, 7, 14], [4, 10, 10], [2, 13, 12]]} /></Segment>
              </Segments>
              <Segments>
                <Segment aria-label="Zmenšit odsazení"><Indent flip /></Segment>
                <Segment aria-label="Zvětšit odsazení"><Indent /></Segment>
              </Segments>
            </Row>
          </Rows>
          <Divider />
          <Rows>
            <TextButton><Wrap />Zalamovat text</TextButton>
            <TextButton><Merge />Sloučit a zarovnat na střed<Down c={grey} /></TextButton>
          </Rows>
        </Group>

        <Group w={135} name="Číslo" launcher dim>
          <Rows>
            <SelectWrap $w={128}><Select aria-label="Formát čísla" disabled><option>Číslo</option></Select><Down c={grey} /></SelectWrap>
            <Row>
              <Segments>
                <Segment $w={34} aria-label="Měna"><Currency /><Down c={grey} /></Segment>
                <Segment>%</Segment>
                <Segment><Digits>000</Digits></Segment>
              </Segments>
              <Segments>
                <Segment aria-label="Přidat desetinné místo"><Decimals /></Segment>
                <Segment $w={21} aria-label="Odebrat desetinné místo"><Decimals less /></Segment>
              </Segments>
            </Row>
          </Rows>
        </Group>

        <Group w={205} name="Styly">
          <BigButton w={75} icon={<Conditional />} lines={["Podmíněné", "formátování"]} />
          <BigButton w={76} icon={<FormatTable />} lines={["Formátovat", "jako tabulku"]} />
          <BigButton w={48} icon={<CellStyles />} lines={["Styly", "buňky"]} />
        </Group>

        <Group w={146} name="Buňky" pad={2}>
          <BigButton w={44} icon={<InsertCells />} lines={["Vložit", ""]} />
          <BigButton w={52} icon={<DeleteCells />} lines={["Odstranit", ""]} />
          <BigButton w={44} icon={<FormatCells />} lines={["Formát", ""]} />
        </Group>

        <Group w={136} name="Úpravy" pad={2}>
          <SmallColumn $w={30}>
            <SmallButton aria-label="Součet"><Sigma /><Down c="#3e6aaa" /></SmallButton>
            <SmallButton aria-label="Výplň"><FillDown /><Down c={grey} /></SmallButton>
            <SmallButton aria-label="Vymazat"><Eraser /><Down c="#3e6aaa" /></SmallButton>
          </SmallColumn>
          <BigButton w={56} icon={<SortFilter />} lines={["Seřadit a", "filtrovat"]} />
          <BigButton w={42} icon={<Binoculars />} lines={["Najít a", "vybrat"]} on />
        </Group>
      </RibbonBar>

      <FormulaBar>
        <NameBox>
          <NameInput aria-label="Pole názvů" defaultValue="SUMA" />
          <Down c="#000" w={7} />
        </NameBox>
        <FormulaTools>
          <svg width="12" height="12" viewBox="0 0 12 12"><circle cx="6" cy="6" r="4.500" fill="#c5cbd3" stroke="#e3e8ee" /></svg>
          <PlainButton aria-label="Storno"><svg width="10" height="10" viewBox="0 0 10 10"><path d="M1 1l8 8M9 1L1 9" stroke="#4d5560" strokeWidth="2" /></svg></PlainButton>
          <PlainButton aria-label="Zadat"><svg width="13" height="11" viewBox="0 0 13 11"><path d="M1 5l4 4 7-8" stroke="#4d5560" strokeWidth="2.400" fill="none" /></svg></PlainButton>
          <PlainButton aria-label="Vložit funkci"><DarkGlyph $italic>fx</DarkGlyph></PlainButton>
        </FormulaTools>
        <FormulaInput aria-label="Řádek vzorců" defaultValue="=L10/D21" />
        <ExpandButton aria-label="Rozbalit řádek vzorců">
          <svg width="8" height="9" viewBox="0 0 8 9"><path d="M1 1l3 3 3-3M1 5l3 3 3-3" stroke="#000" strokeWidth="1.500" fill="none" /></svg>
        </ExpandButton>
      </FormulaBar>

      <Workspace>
        <GridView>
          <SheetTable />
          <Picture $x={892} $y={39} $w={400} $h={214}>
            <Density />
            <Legend>
              <dt>kde je</dt><dd />
              <dt>N</dt><dd>rozsah souboru</dd>
              <dt>S<sub>x</sub></dt><dd>směrodatná odchylka souboru</dd>
              <dt><ClassDeviation /></dt><dd>směrodatná odchylka v třídních jednotkách (</dd>
              <dt>n<sub>i</sub></dt><dd>četnost normálního rozdělení i-té třídy</dd>
            </Legend>
          </Picture>
          <Picture $x={893} $y={277} $w={299} $h={158}><Critical /></Picture>
          <ChartFrame $x={696} $y={520} $w={546} $h={200} />
        </GridView>
        <VScroll>
          <SplitBox><Tri d="M0 0h8v1H0z" w={8} h={1} c="#5b84b8" /></SplitBox>
          <ArrowCell aria-label="Nahoru"><Tri d="M0 5h9L4.500 0z" w={9} h={5} /></ArrowCell>
          <VThumb><svg width="8" height="8" viewBox="0 0 8 8"><path d="M0 .5h8M0 2.500h8M0 4.500h8M0 6.500h8" stroke="#7d8896" /></svg></VThumb>
          <VTrack />
          <ArrowCell aria-label="Dolů"><Tri d="M0 0h9L4.500 5z" w={9} h={5} /></ArrowCell>
        </VScroll>
      </Workspace>

      <BottomRow>
        <SheetNav>
          <PlainButton aria-label="První list"><Tri d="M0 0h1v7H0zM6 0v7L2 3.500z" c="#15428b" /></PlainButton>
          <PlainButton aria-label="Předchozí list"><Tri d="M5 0v7L1 3.500z" c="#15428b" /></PlainButton>
          <PlainButton aria-label="Další list"><Tri d="M1 0v7l4-3.500z" c="#15428b" /></PlainButton>
          <PlainButton aria-label="Poslední list"><Tri d="M6 0h1v7H6zM1 0v7l4-3.500z" c="#15428b" /></PlainButton>
        </SheetNav>
        <SheetTab $w={50} $active>List1</SheetTab>
        <SheetTab $w={45}>List2</SheetTab>
        <SheetTab $w={46}>List3</SheetTab>
        <SheetTab $w={33} aria-label="Vložit list">
          <svg width="15" height="13" viewBox="0 0 15 13">
            <path d="M4.500 2.500h9v8l-2 1h-7z" fill="#e8eef7" stroke="#6b7fa5" />
            <path d="M4 0v8M0 4h8M1 1l6 6M7 1L1 7" stroke="#e08a1c" /><circle cx="4" cy="4" r="1.500" fill="#fff3b0" />
          </svg>
        </SheetTab>
        <HScroll>
          <HSplit><Tri d="M0 0h1v8H0z" w={1} h={8} c="#5b84b8" /></HSplit>
          <HArrow aria-label="Vlevo"><Tri d="M5 0v8L1 4z" h={8} /></HArrow>
          <HThumb><svg width="8" height="7" viewBox="0 0 8 7"><path d="M.5 0v7M2.500 0v7M4.500 0v7M6.500 0v7" stroke="#7d8896" /></svg></HThumb>
          <HTrack />
          <HArrow aria-label="Vpravo"><Tri d="M2 0v8l4-4z" h={8} /></HArrow>
          <HSplit><Tri d="M0 0h1v8H0z" w={1} h={8} c="#5b84b8" /></HSplit>
        </HScroll>
      </BottomRow>

      <StatusBar>
        <Mode>Úpravy</Mode>
        <StatusRight>
          <ViewButtons>
            <ViewButton aria-label="Normálně"><svg width="14" height="10" viewBox="0 0 14 10"><path d="M.5.5h12v9H.5zM4.500 0v10M8.500 0v10M0 3.500h13M0 6.500h13" fill="#fff" stroke="#555" /></svg></ViewButton>
            <ViewButton aria-label="Rozložení stránky"><svg width="13" height="12" viewBox="0 0 13 12"><path d="M.5.5h12v11H.5z" fill="#a5a5a5" stroke="#555" /><path d="M3.500 2.500h6v7h-6z" fill="#fff" stroke="#555" /><path d="M5 4.500h3M5 6.500h3" stroke="#777" /></svg></ViewButton>
            <ViewButton aria-label="Konce stránek"><svg width="13" height="12" viewBox="0 0 13 12"><path d="M.5.5h12v11H.5z" fill="#b5b5b5" stroke="#555" /><path d="M1 1h3v6H1zM4.500 1h4v6h-4z" fill="#fff" stroke="#555" /></svg></ViewButton>
          </ViewButtons>
          <Zoom>100 %</Zoom>
          <PlainButton aria-label="Oddálit"><ZoomKnob /></PlainButton>
          <ZoomTrack />
          <PlainButton aria-label="Přiblížit"><ZoomKnob plus /></PlainButton>
        </StatusRight>
      </StatusBar>
    </Window>
  );
}
